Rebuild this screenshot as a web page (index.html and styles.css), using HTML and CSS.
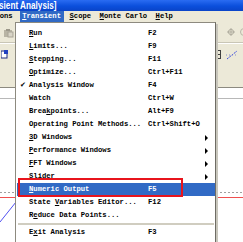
FILE: index.html
```html
<!DOCTYPE html>
<html>
<head>
<meta charset="utf-8">
<link rel="stylesheet" href="styles.css">
</head>
<body>
<div class="window">
  <div class="titlebar"><span class="title">sient Analysis]</span></div>
  <div class="menubar">
    <span class="mitem first">ons</span>
    <span class="mitem active"><u>T</u>ransient</span>
    <span class="mitem"><u>S</u>cope</span>
    <span class="mitem"><u>M</u>onte Carlo</span>
    <span class="mitem"><u>H</u>elp</span>
  </div>
  <div class="toolbar">
    <div class="tbrow">
      <div class="tgroup">
        <svg class="ico clip" width="11" height="10" viewBox="0 0 11 10"><rect x="1" y="2" width="8" height="7" fill="#b8b4a4"/><rect x="3" y="1" width="4" height="2" fill="#9c988a"/><rect x="5" y="4" width="5" height="5" fill="#d8d4c6" stroke="#a8a496" stroke-width="1"/></svg>
      </div>
      <div class="tgroup right1">
        <svg class="ico" width="8" height="8" viewBox="0 0 8 8"><circle cx="4" cy="4" r="2.6" fill="none" stroke="#b0ad9f" stroke-width="1"/><path d="M4 0v8M0 4h8" stroke="#b0ad9f" stroke-width="1"/></svg>
        <svg class="ico" width="5" height="8" viewBox="0 0 5 8"><path d="M4 0.5A3.5 3.5 0 0 0 4 7.5" fill="none" stroke="#b8b5a8"/></svg>
      </div>
    </div>
    <div class="tbrow row2">
      <div class="tgroup">
        <svg class="ico" width="8" height="9" viewBox="0 0 8 9"><rect x="0" y="1" width="6" height="7" fill="#fff" stroke="#1a2a80"/><rect x="3" y="0" width="4" height="4" fill="#2040c0"/></svg>
        <span class="tsep"></span>
      </div>
      <div class="tgroup right2">
        <svg class="ico" width="7" height="9" viewBox="0 0 7 9"><rect x="0.5" y="0.5" width="5" height="8" fill="none" stroke="#404040"/><path d="M0.5 4.5h5" stroke="#404040"/></svg>
        <svg class="ico" width="12" height="10" viewBox="0 0 12 10"><path d="M1 9L11 1" stroke="#3848e0" stroke-width="1" stroke-dasharray="2 1"/><path d="M0 5h12" stroke="#8890c8" stroke-dasharray="1 2"/></svg>
      </div>
    </div>
  </div>
  <div class="plot">
    <svg class="plotsvg" width="243" height="153" viewBox="0 0 243 153">
      <line x1="0" y1="10.5" x2="243" y2="10.5" stroke="#b8b8b8"/>
      <line x1="0" y1="104.5" x2="243" y2="104.5" stroke="#a0a0a0" stroke-dasharray="2 2"/>
      <line x1="0" y1="109.5" x2="243" y2="109.5" stroke="#f05050"/>
      <line x1="0" y1="134" x2="16" y2="114" stroke="#5050f0"/>
    </svg>
  </div>

  <div class="menu">
    <div class="item"><span class="chk"></span><span class="lbl"><u>R</u>un</span><span class="key">F2</span></div>
    <div class="item"><span class="chk"></span><span class="lbl"><u>L</u>imits...</span><span class="key">F9</span></div>
    <div class="item"><span class="chk"></span><span class="lbl"><u>S</u>tepping...</span><span class="key">F11</span></div>
    <div class="item"><span class="chk"></span><span class="lbl"><u>O</u>ptimize...</span><span class="key">Ctrl+F11</span></div>
    <div class="item"><span class="chk">&#10004;</span><span class="lbl">Analysis Window</span><span class="key">F4</span></div>
    <div class="item"><span class="chk"></span><span class="lbl">Watch</span><span class="key">Ctrl+W</span></div>
    <div class="item"><span class="chk"></span><span class="lbl">Brea<u>k</u>points...</span><span class="key">Alt+F9</span></div>
    <div class="item"><span class="chk"></span><span class="lbl">Operating Point Methods...</span><span class="key">Ctrl+Shift+O</span></div>
    <div class="item"><span class="chk"></span><span class="lbl"><u>3</u>D Windows</span><span class="key"></span><span class="arr"></span></div>
    <div class="item"><span class="chk"></span><span class="lbl"><u>P</u>erformance Windows</span><span class="key"></span><span class="arr"></span></div>
    <div class="item"><span class="chk"></span><span class="lbl"><u>F</u>FT Windows</span><span class="key"></span><span class="arr"></span></div>
    <div class="item"><span class="chk"></span><span class="lbl">S<u>l</u>ider</span><span class="key"></span><span class="arr"></span></div>
    <div class="item sel"><span class="chk"></span><span class="lbl"><u>N</u>umeric Output</span><span class="key">F5</span></div>
    <div class="item"><span class="chk"></span><span class="lbl">State <u>V</u>ariables Editor...</span><span class="key">F12</span></div>
    <div class="item"><span class="chk"></span><span class="lbl">R<u>e</u>duce Data Points...</span><span class="key"></span></div>
    <div class="sep"></div>
    <div class="item"><span class="chk"></span><span class="lbl">E<u>x</u>it Analysis</span><span class="key">F3</span></div>
    <div class="redbox"></div>
  </div>
</div>
</body>
</html>
```

FILE: styles.css
```css
html, body {
  margin: 0;
  padding: 0;
  background: #ffffff;
}
.window {
  position: relative;
  width: 243px;
  height: 242px;
  overflow: hidden;
  font-family: "Liberation Mono", "DejaVu Sans Mono", monospace;
  font-size: 7.2px;
  font-weight: bold;
  color: #000;
}
.titlebar {
  height: 11px;
  background: linear-gradient(#2a6cf2, #0b4fdc 55%, #0a44c8);
  overflow: hidden;
}
.title {
  display: block;
  font-family: "Liberation Sans", Arial, sans-serif;
  font-weight: bold;
  font-size: 10.5px;
  line-height: 10px;
  color: #fff;
  white-space: nowrap;
  margin-left: -1px;
  transform: scaleX(0.78);
  transform-origin: left center;
}
.menubar {
  height: 11px;
  background: #ece9d8;
  display: flex;
  gap: 3.5px;
  align-items: stretch;
  line-height: 11px;
}
.mitem {
  padding: 0 2.5px;
  white-space: nowrap;
}
.mitem.first {
  padding-left: 0;
  margin-left: -0.3px;
  margin-right: 1px;
}
.mitem.active {
  background: #316ac5;
  color: #fff;
}
u {
  text-decoration: underline;
  text-underline-offset: 1px;
}
.toolbar {
  height: 66px;
  background: #ece9d8;
  border-bottom: 1px solid #8c8a80;
  box-sizing: border-box;
}
.tbrow {
  height: 20px;
  display: flex;
  justify-content: space-between;
  align-items: center;
  border-bottom: 1px solid #c9c6b6;
  box-shadow: 0 1px 0 #fff;
}
.row2 {
  height: 19px;
  border-bottom: 0;
  box-shadow: none;
  margin-top: 2px;
}
.tgroup {
  display: flex;
  align-items: center;
  gap: 5px;
}
.ico { display: block; }
.clip { margin-left: 3px; margin-top: 2px; }
.right1 { gap: 5px; margin-right: -2px; }
.right2 { gap: 4px; margin-right: 5px; }
.row2 .tgroup:first-child { margin-left: 1px; }
.tsep {
  width: 2px;
  height: 11px;
  background: #6a6a6a;
  margin-left: 1px;
}
.plot {
  height: 154px;
  background: #fff;
}
.plotsvg { display: block; }

.menu {
  position: absolute;
  left: 15px;
  top: 22px;
  width: 201px;
  height: 230px;
  box-sizing: border-box;
  background: #fff;
  border: 1px solid #8d8a7f;
  border-right-color: #6e6c64;
  padding: 4px 0 0 1px;
  box-shadow: 2px 2px 0 #c8c6bc;
}
.item {
  height: 13px;
  line-height: 13px;
  display: grid;
  grid-template-columns: 12px 119px 1fr 10px;
  white-space: nowrap;
  width: 198px;
}
.item .chk {
  font-size: 7px;
  padding-left: 3px;
  font-family: "DejaVu Sans", sans-serif;
  font-weight: normal;
}
.item .arr {
  width: 0;
  height: 0;
  border-top: 3px solid transparent;
  border-bottom: 3px solid transparent;
  border-left: 3px solid #000;
  align-self: center;
}
.item.sel {
  background: #316ac5;
  color: #fff;
}
.sep {
  height: 2px;
  background: #d0cdc0;
  margin: 1px 1px 1px 1px;
  width: 196px;
}
.redbox {
  position: absolute;
  left: 2px;
  top: 155px;
  width: 165px;
  height: 19px;
  border: 2px solid #e8141c;
  box-sizing: border-box;
}
```
